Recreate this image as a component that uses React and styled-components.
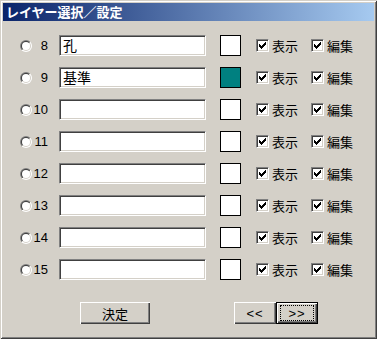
import React from "react";
import styled, { createGlobalStyle } from "styled-components";

const Global = createGlobalStyle`
  html, body { margin: 0; padding: 0; background: #d4d0c8; }
  * { box-sizing: border-box; }
`;

const FONT = `"Liberation Sans", "Noto Sans CJK JP", sans-serif`;

const Window = styled.div`
  width: 377px;
  height: 339px;
  padding: 3px;
  background: #d4d0c8;
  box-shadow: inset 1px 1px 0 #d4d0c8, inset -1px -1px 0 #404040,
    inset 2px 2px 0 #ffffff, inset -2px -2px 0 #808080;
  display: flex;
  flex-direction: column;
  font-family: ${FONT};
  color: #000;
`;

const TitleBar = styled.div`
  height: 18px;
  background: linear-gradient(to right, #0a246a, #a6caf0);
  color: #fff;
  font-weight: bold;
  font-size: 13px;
  line-height: 18px;
  padding-left: 3px;
  white-space: nowrap;
  font-family: "Noto Sans CJK JP", sans-serif;
`;

const Body = styled.div`
  padding-top: 14px;
  display: flex;
  flex-direction: column;
  gap: 11px;
`;

const Row = styled.div`
  display: flex;
  align-items: center;
  height: 21px;
`;

const RadioOuter = styled.span`
  margin-left: 17px;
  width: 12px;
  height: 12px;
  border-radius: 50%;
  background: linear-gradient(135deg, #808080 50%, #ffffff 50%);
  display: flex;
  align-items: center;
  justify-content: center;
  flex: none;
`;

const RadioMid = styled.span`
  width: 10px;
  height: 10px;
  border-radius: 50%;
  background: linear-gradient(135deg, #404040 50%, #d4d0c8 50%);
  display: flex;
  align-items: center;
  justify-content: center;
`;

const RadioInner = styled.span`
  width: 8px;
  height: 8px;
  border-radius: 50%;
  background: #fff;
`;

const Num = styled.span`
  width: 16px;
  text-align: right;
  font-size: 13px;
  margin-right: 11px;
  flex: none;
`;

const Field = styled.div`
  width: 147px;
  height: 21px;
  background: #fff;
  border: 1px solid;
  border-color: #808080 #ffffff #ffffff #808080;
  box-shadow: inset 1px 1px 0 #404040, inset -1px -1px 0 #d4d0c8;
  font-size: 14px;
  line-height: 19px;
  padding-left: 3px;
  font-family: "Noto Sans CJK JP", sans-serif;
  flex: none;
`;

const Swatch = styled.div`
  margin-left: 14px;
  width: 21px;
  height: 21px;
  border: 1px solid #000;
  background: ${(p) => p.$color};
  flex: none;
`;

const Check = styled.span`
  margin-left: ${(p) => p.$ml}px;
  width: 13px;
  height: 13px;
  background: #fff;
  border: 1px solid;
  border-color: #808080 #ffffff #ffffff #808080;
  box-shadow: inset 1px 1px 0 #404040, inset -1px -1px 0 #d4d0c8;
  display: flex;
  align-items: center;
  justify-content: center;
  flex: none;
`;

const CheckLabel = styled.span`
  margin-left: 3px;
  font-size: 13px;
  font-family: "Noto Sans CJK JP", sans-serif;
  white-space: nowrap;
`;

const Buttons = styled.div`
  margin-top: 22px;
  display: flex;
  align-items: center;
  padding-left: 77px;
`;

const Button = styled.div`
  width: ${(p) => p.$w}px;
  height: 22px;
  margin-left: ${(p) => p.$ml || 0}px;
  background: #d4d0c8;
  font-size: 13px;
  font-family: "Noto Sans CJK JP", sans-serif;
  display: flex;
  align-items: center;
  justify-content: center;
  box-shadow: inset 1px 1px 0 #ffffff, inset -1px -1px 0 #404040,
    inset -2px -2px 0 #808080;
  flex: none;
  position: relative;
`;

const DefaultButton = styled(Button)`
  border: 1px solid #000;
`;

const Focus = styled.span`
  position: absolute;
  left: 3px;
  top: 2px;
  right: 3px;
  bottom: 2px;
  border: 1px dotted #000;
`;

const Arrow = styled.span`
  font-family: "Liberation Sans", sans-serif;
  font-size: 13px;
  letter-spacing: 1px;
`;

const CheckMark = () => (
  <svg width="7" height="7" viewBox="0 0 7 7" shapeRendering="crispEdges">
    <path
      d="M0 2h1v3H0zM1 3h1v3H1zM2 4h1v3H2zM3 3h1v3H3zM4 2h1v3H4zM5 1h1v3H5zM6 0h1v3H6z"
      fill="#000"
    />
  </svg>
);

const rows = [
  { n: 8, text: "孔", color: "#ffffff" },
  { n: 9, text: "基準", color: "#008080" },
  { n: 10, text: "", color: "#ffffff" },
  { n: 11, text: "", color: "#ffffff" },
  { n: 12, text: "", color: "#ffffff" },
  { n: 13, text: "", color: "#ffffff" },
  { n: 14, text: "", color: "#ffffff" },
  { n: 15, text: "", color: "#ffffff" },
];

export default function App() {
  return (
    <>
      <Global />
      <Window>
        <TitleBar>レイヤー選択／設定</TitleBar>
        <Body>
          {rows.map((r) => (
            <Row key={r.n}>
              <RadioOuter>
                <RadioMid>
                  <RadioInner />
                </RadioMid>
              </RadioOuter>
              <Num>{r.n}</Num>
              <Field>{r.text}</Field>
              <Swatch $color={r.color} />
              <Check $ml={15}>
                <CheckMark />
              </Check>
              <CheckLabel>表示</CheckLabel>
              <Check $ml={13}>
                <CheckMark />
              </Check>
              <CheckLabel>編集</CheckLabel>
            </Row>
          ))}
        </Body>
        <Buttons>
          <Button $w={70}>決定</Button>
          <Button $w={42} $ml={84}>
            <Arrow>&lt;&lt;</Arrow>
          </Button>
          <DefaultButton $w={42}>
            <Arrow>&gt;&gt;</Arrow>
            <Focus />
          </DefaultButton>
        </Buttons>
      </Window>
    </>
  );
}
